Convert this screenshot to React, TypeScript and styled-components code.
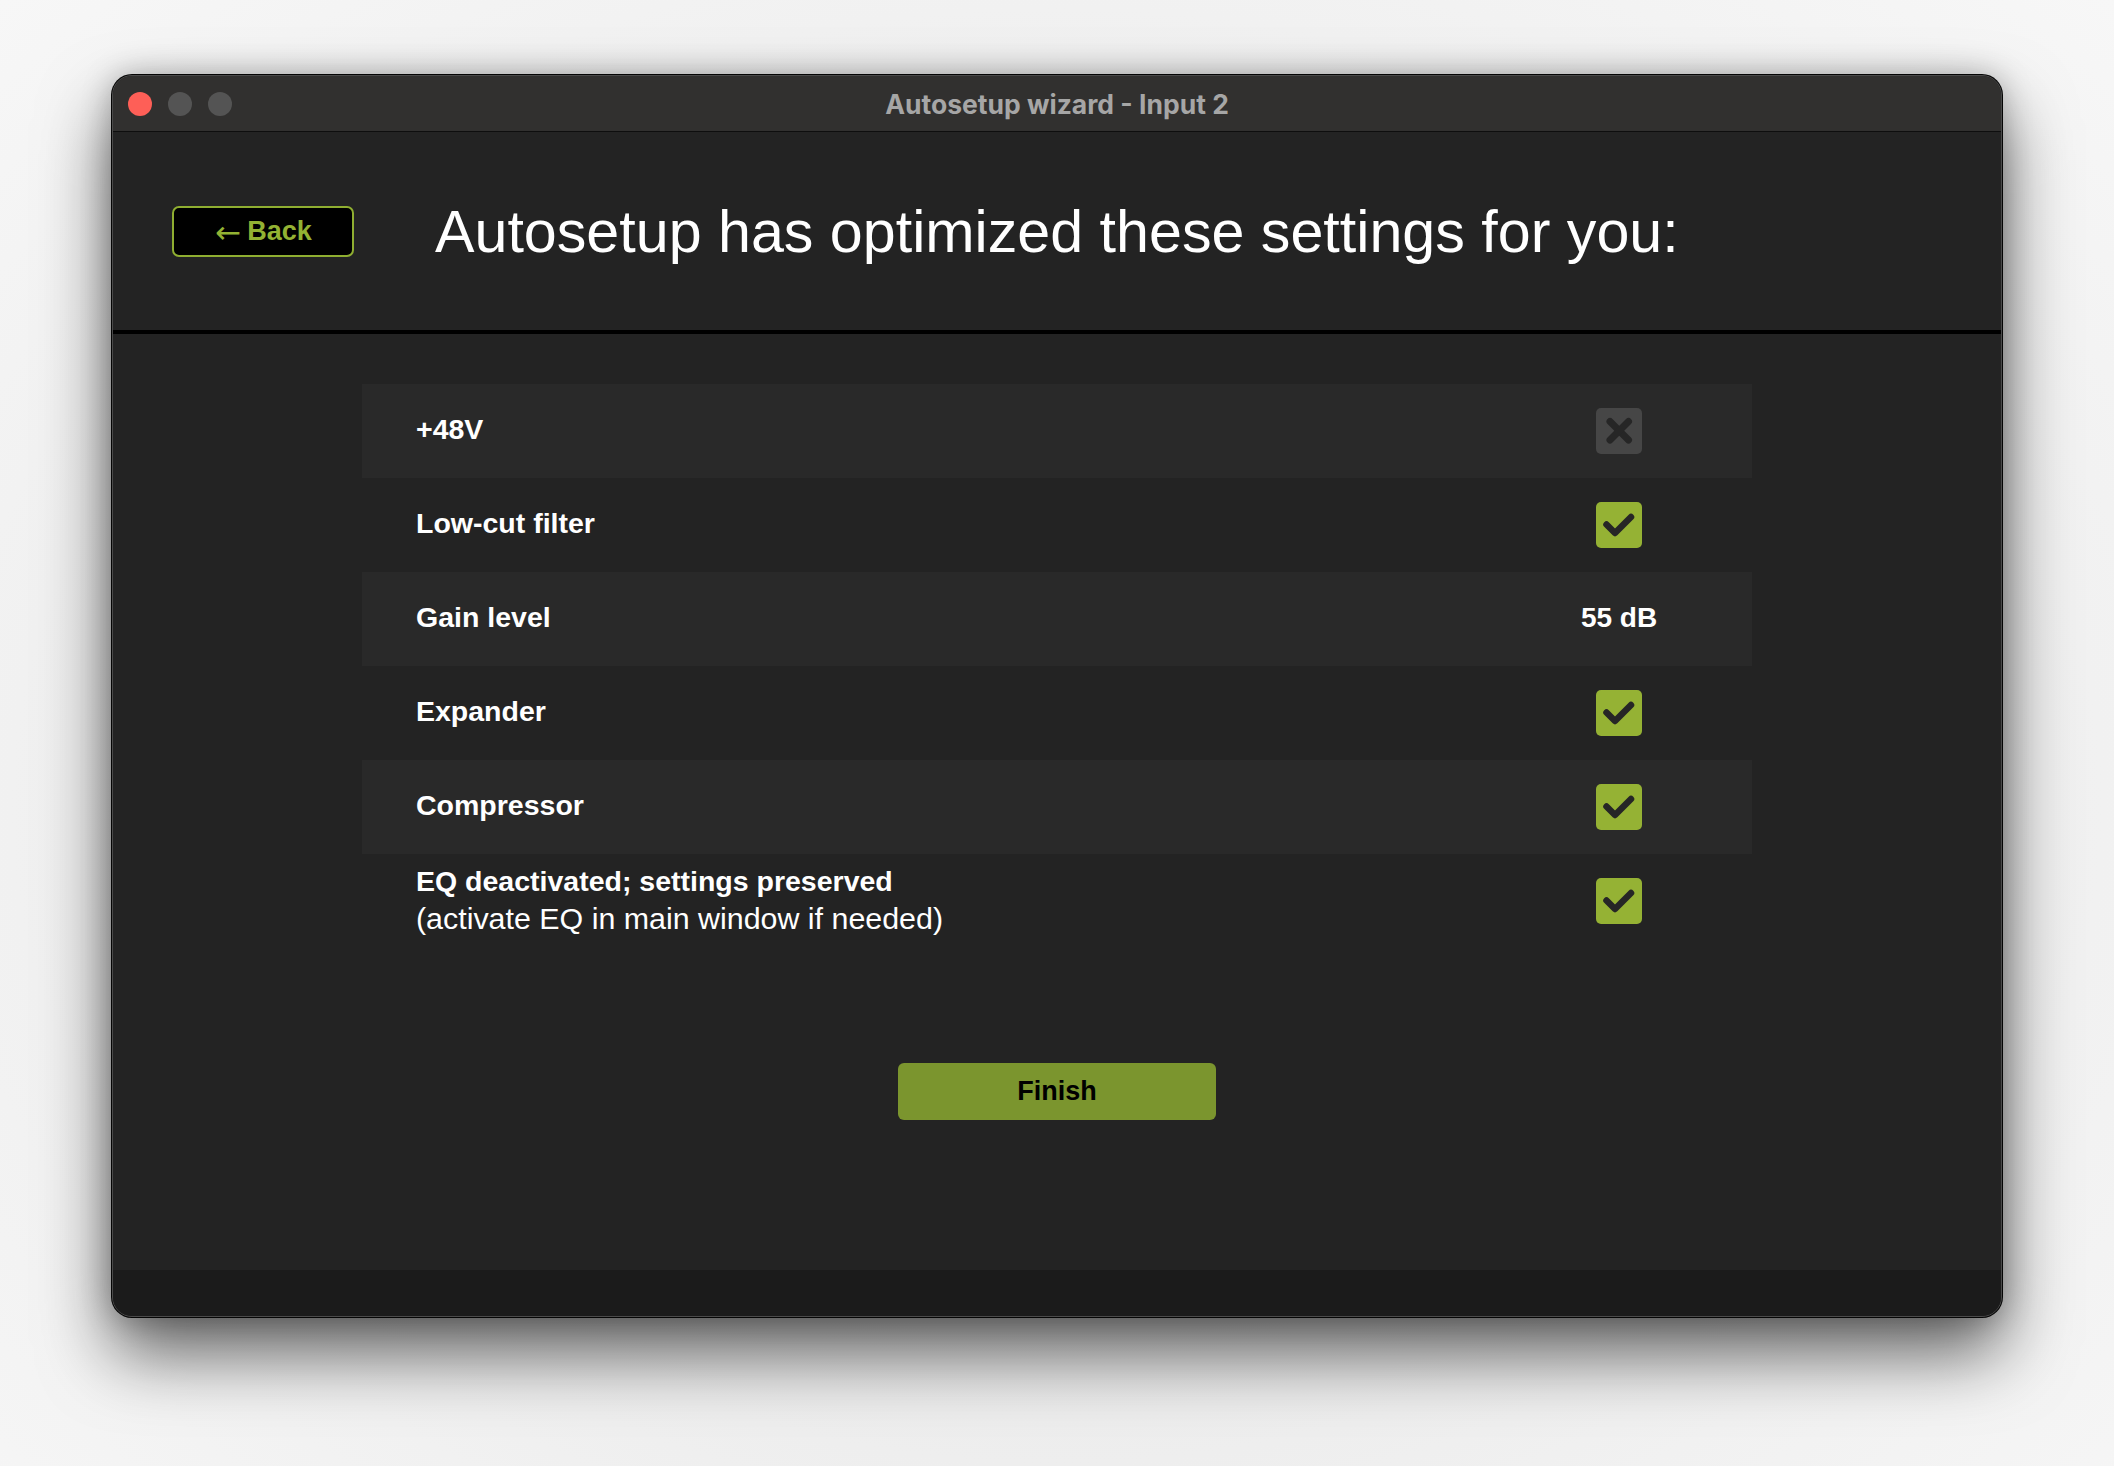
import React from "react";
import styled, { createGlobalStyle } from "styled-components";

const GlobalStyle = createGlobalStyle`
  html, body {
    margin: 0;
    padding: 0;
    background: #efefef;
  }
  body {
    font-family: "Liberation Sans", Arial, sans-serif;
  }
  * { box-sizing: border-box; }
`;

const Page = styled.div`
  padding: 75px 0 0 112px;
  width: 2114px;
  height: 1466px;
  overflow: hidden;
  background: radial-gradient(ellipse at 50% 55%, #e0e0e0 0%, #f1f1f1 70%, #f7f7f7 100%);
`;

const Window = styled.div`
  width: 1890px;
  height: 1242px;
  display: flex;
  flex-direction: column;
  background: #232323;
  border: 1px solid #4a4a4a;
  border-radius: 20px;
  overflow: hidden;
  box-shadow: 0 0 0 1px #050505, 0 36px 70px rgba(0, 0, 0, 0.6),
    0 0 30px rgba(0, 0, 0, 0.25);
`;

const TitleBar = styled.div`
  height: 56px;
  flex: 0 0 auto;
  display: grid;
  grid-template-columns: 1fr auto 1fr;
  align-items: center;
  background: #31302f;
  border-bottom: 1px solid #0e0e0e;
  padding: 0 15px;
`;

const Lights = styled.div`
  display: flex;
  gap: 16px;
  align-items: center;
`;

const Light = styled.span<{ $color: string }>`
  width: 24px;
  height: 24px;
  border-radius: 50%;
  background: ${(p) => p.$color};
`;

const WindowTitle = styled.div`
  font-family: Inter, "Noto Sans", sans-serif;
  font-weight: 700;
  font-size: 26.5px;
  color: #a6a6a6;
`;

const Header = styled.header`
  height: 202px;
  flex: 0 0 auto;
  display: flex;
  align-items: center;
  padding-left: 59px;
  border-bottom: 4px solid #000;
`;

const BackButton = styled.button`
  width: 182px;
  height: 51px;
  background: #000;
  border: 2px solid #8fae31;
  border-radius: 7px;
  color: #93b233;
  font-family: "Liberation Sans", Arial, sans-serif;
  font-size: 27px;
  font-weight: 700;
  display: flex;
  align-items: center;
  justify-content: center;
  gap: 6px;
  padding: 0 0 0 1px;
  cursor: pointer;
`;

const Arrow = styled.span`
  font-family: "DejaVu Sans", sans-serif;
  font-weight: 400;
  font-size: 31px;
  line-height: 1;
  transform: translateY(1px);
`;

const Heading = styled.h1`
  margin: 0 0 0 81px;
  font-family: "Liberation Sans", Arial, sans-serif;
  font-weight: 400;
  font-size: 59.2px;
  color: #ffffff;
  letter-spacing: 0;
`;

const Main = styled.main`
  flex: 1 1 auto;
  display: flex;
  flex-direction: column;
  align-items: center;
  padding-top: 50px;
`;

const SettingsList = styled.div`
  width: 1390px;
  display: flex;
  flex-direction: column;
`;

const Row = styled.div<{ $striped: boolean }>`
  height: 94px;
  display: flex;
  align-items: center;
  padding-left: 54px;
  padding-right: 73px;
  background: ${(p) => (p.$striped ? "#292929" : "transparent")};
`;

const Label = styled.div`
  flex: 1 1 auto;
  display: flex;
  flex-direction: column;
  color: #ffffff;
  font-size: 28.5px;
  font-weight: 700;
  line-height: 37px;
  margin-top: -3px;
`;

const SubLabel = styled.span`
  font-weight: 400;
  font-size: 30.4px;
`;

const ValueCell = styled.div`
  width: 120px;
  display: flex;
  justify-content: center;
  align-items: center;
  color: #ffffff;
  font-size: 28px;
  font-weight: 700;
  margin-top: -2px;
`;

const Box = styled.div<{ $on: boolean }>`
  width: 46px;
  height: 46px;
  margin-top: 2px;
  border-radius: 5px;
  background: ${(p) => (p.$on ? "#95b234" : "#464646")};
  display: flex;
  align-items: center;
  justify-content: center;
`;

const FinishButton = styled.button`
  margin-top: 115px;
  width: 318px;
  height: 57px;
  background: #7b952e;
  border: none;
  border-radius: 6px;
  color: #000;
  font-family: "Liberation Sans", Arial, sans-serif;
  font-size: 27px;
  font-weight: 700;
  cursor: pointer;
`;

const Footer = styled.footer`
  height: 46px;
  flex: 0 0 auto;
  background: #1b1b1b;
`;

const CheckBox: React.FC<{ on: boolean }> = ({ on }) => (
  <Box $on={on}>
    <svg width="46" height="46" viewBox="0 0 46 46">
      {on ? (
        <polyline
          points="10.5,22.5 19,31 35,15"
          fill="none"
          stroke="#262626"
          strokeWidth="6.5"
          strokeLinecap="round"
          strokeLinejoin="round"
        />
      ) : (
        <g stroke="#262626" strokeWidth="7" strokeLinecap="round">
          <line x1="14" y1="13.5" x2="32.5" y2="32" />
          <line x1="32.5" y1="13.5" x2="14" y2="32" />
        </g>
      )}
    </svg>
  </Box>
);

type Setting = {
  label: string;
  sub?: string;
  kind: "check" | "value";
  on?: boolean;
  value?: string;
};

const settings: Setting[] = [
  { label: "+48V", kind: "check", on: false },
  { label: "Low-cut filter", kind: "check", on: true },
  { label: "Gain level", kind: "value", value: "55 dB" },
  { label: "Expander", kind: "check", on: true },
  { label: "Compressor", kind: "check", on: true },
  {
    label: "EQ deactivated; settings preserved",
    sub: "(activate EQ in main window if needed)",
    kind: "check",
    on: true,
  },
];

export default function App() {
  return (
    <>
      <GlobalStyle />
      <Page>
        <Window>
          <TitleBar>
            <Lights>
              <Light $color="#fe5f57" />
              <Light $color="#545454" />
              <Light $color="#545454" />
            </Lights>
            <WindowTitle>Autosetup wizard - Input 2</WindowTitle>
            <div />
          </TitleBar>
          <Header>
            <BackButton>
              <Arrow>←</Arrow>
              <span>Back</span>
            </BackButton>
            <Heading>Autosetup has optimized these settings for you:</Heading>
          </Header>
          <Main>
            <SettingsList>
              {settings.map((s, i) => (
                <Row key={s.label} $striped={i % 2 === 0}>
                  <Label>
                    <span>{s.label}</span>
                    {s.sub && <SubLabel>{s.sub}</SubLabel>}
                  </Label>
                  <ValueCell>
                    {s.kind === "value" ? s.value : <CheckBox on={!!s.on} />}
                  </ValueCell>
                </Row>
              ))}
            </SettingsList>
            <FinishButton>Finish</FinishButton>
          </Main>
          <Footer />
        </Window>
      </Page>
    </>
  );
}
